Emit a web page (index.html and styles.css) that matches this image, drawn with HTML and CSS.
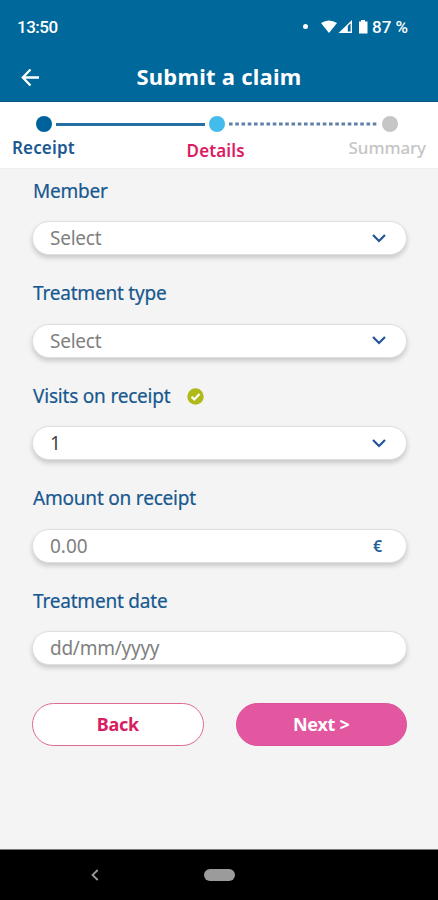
FILE: index.html
```html
<!DOCTYPE html>
<html lang="en">
<head>
<meta charset="utf-8">
<title>Submit a claim</title>
<link rel="stylesheet" href="styles.css">
</head>
<body>
<div class="app">
  <header class="top">
    <div class="status">
      <span class="clock">13:50</span>
      <span class="dot"></span>
      <svg class="signals" width="50" height="16" viewBox="0 0 50 16">
        <path d="M0 4Q8 -1 16 4L8 14Z" fill="#fff"/>
        <path d="M31 1V14H17.500Z" fill="#fff"/>
        <path d="M26.800 7L29.600 4.200V12.600H26.800Z" fill="#00689b"/>
        <path d="M38 2.500H40V1H44V2.500H46.500V14.500H38Z" fill="#fff"/>
      </svg>
      <span class="battery">87 %</span>
    </div>
    <div class="bar">
      <svg class="arrow" width="20" height="20" viewBox="0 0 20 20"><path d="M19 10.500H3M10.500 2.500L2.800 10.500L10.500 18.500" fill="none" stroke="#fff" stroke-width="2.300"/></svg>
      <h1 class="title">Submit a claim</h1>
    </div>
  </header>
  <nav class="steps">
    <div class="track">
      <i class="node done"></i><i class="line solid"></i><i class="node current"></i>
      <svg class="line" height="4" viewBox="0 0 149 4"><path d="M0 2H149" stroke="#5f80a8" stroke-width="2.800" stroke-dasharray="3.600 2.650"/></svg>
      <i class="node todo"></i>
    </div>
    <div class="names"><span class="name receipt">Receipt</span><span class="name details">Details</span><span class="name summary">Summary</span></div>
  </nav>
  <main class="form">
    <div class="field"><div class="label"><span>Member</span></div><div class="input"><span>Select</span><svg class="chevron" width="14" height="9" viewBox="0 0 14 9"><path d="M1 1L7 7L13 1"/></svg></div></div>
    <div class="field"><div class="label"><span>Treatment type</span></div><div class="input"><span>Select</span><svg class="chevron" width="14" height="9" viewBox="0 0 14 9"><path d="M1 1L7 7L13 1"/></svg></div></div>
    <div class="field"><div class="label"><span>Visits on receipt</span><svg class="check" width="17" height="17" viewBox="0 0 17 17"><circle cx="8.500" cy="8.500" r="8.200" fill="#b0b91a"/><path d="M4.500 8.700L7.300 11.400L12.500 6" fill="none" stroke="#fff" stroke-width="2.200"/></svg></div><div class="input"><span class="value">1</span><svg class="chevron" width="14" height="9" viewBox="0 0 14 9"><path d="M1 1L7 7L13 1"/></svg></div></div>
    <div class="field"><div class="label"><span>Amount on receipt</span></div><div class="input"><span class="amount">0.00</span><span class="euro">€</span></div></div>
    <div class="field"><div class="label"><span>Treatment date</span></div><div class="input"><span>dd/mm/yyyy</span></div></div>
    <div class="actions"><button class="btn back">Back</button><button class="btn next">Next &gt;</button></div>
  </main>
  <footer class="system">
    <svg class="sysback" width="8" height="12" viewBox="0 0 8 12"><path d="M6.700 1L1.500 6L6.700 11" fill="none" stroke="#999" stroke-width="1.800"/></svg>
    <span class="home"></span>
  </footer>
</div>
</body>
</html>
```

FILE: styles.css
```css
* { box-sizing: border-box; }
body { margin: 0; font-family: "Noto Sans", sans-serif; background: #f4f4f4; }
.app { width: 438px; height: 900px; display: flex; flex-direction: column; overflow: hidden; }
.top { height: 102px; background: #00689b; color: #fff; border-bottom: 1px solid #075286; flex: none; }
.status { height: 52px; padding: 1px 29px 0 17px; display: flex; align-items: center; font: 500 17px/20px Roboto, sans-serif; }
.clock { flex: 1; letter-spacing: -0.5px; }
.dot { width: 5px; height: 5px; border-radius: 50%; background: #fff; margin-right: 13px; }
.signals { margin-right: 1px; }
.battery { width: 37px; white-space: nowrap; }
.bar { height: 50px; padding-left: 20px; display: flex; align-items: center; }
.arrow { flex: none; }
.title { margin: 0; padding-bottom: 1px; width: 358px; text-align: center; font-size: 22px; line-height: 29px; letter-spacing: 0.25px; font-weight: 700; white-space: nowrap; }
.steps { height: 67px; background: #fff; flex: none; padding-top: 14px; border-bottom: 1px solid #efefef; }
.track { display: flex; align-items: center; height: 16px; padding: 0 40px 0 36px; }
.node { width: 16px; height: 16px; border-radius: 50%; flex: none; }
.done { background: #00629b; }
.current { background: #43bcec; }
.todo { background: #c6c6c6; }
.line { flex: none; margin: 0 4px; width: 149px; }
.solid { height: 3px; background: #2470a3; }
.names { display: flex; justify-content: space-between; padding: 4px 12px 0; font-size: 17px; line-height: 24px; font-weight: 600; }
.receipt { color: #1c5992; letter-spacing: 0.15px; }
.details { color: #db1b62; padding-top: 3px; margin-left: 8px; letter-spacing: 0.15px; }
.summary { color: #c5c5c5; letter-spacing: -0.1px; font-weight: 500; }
.form { height: 680px; flex: none; padding: 7.5px 31px 0 32px; }
.field { height: 102.6px; }
.label { height: 28px; display: flex; align-items: center; color: #17588f; font-size: 19px; font-weight: 400; -webkit-text-stroke: 0.2px #17588f; letter-spacing: -0.2px; line-height: 28px; white-space: nowrap; padding-left: 1px; }
.check { margin: 2px 0 0 17px; }
.input { height: 34px; margin-top: 16.5px; border: 1px solid #dedfdf; border-radius: 17px; background: #fff; box-shadow: 0 3px 5px rgba(0,0,0,.18); padding: 0 20px 0 17px; display: flex; align-items: center; justify-content: space-between; color: #808080; font-size: 19px; letter-spacing: -0.25px; line-height: 28px; }
.value { color: #444; }
.amount { letter-spacing: 0; }
.chevron path { fill: none; stroke: #245397; stroke-width: 2.2; }
.euro { color: #245f9b; font-size: 16px; font-weight: 600; margin-right: 4px; }
.actions { display: flex; gap: 32px; padding-top: 13.5px; }
.btn { flex: 1; height: 43px; border-radius: 22px; font: 700 18px/24px "Noto Sans", sans-serif; letter-spacing: -0.3px; padding: 0; }
.back { border: 1px solid #dc6b92; background: #fff; color: #d72062; }
.next { border: 1px solid #dd5199; background: #e2579f; color: #fff; }
.system { flex: 1; background: #000; border-top: 1px solid #777; display: flex; align-items: center; padding-left: 91px; }
.home { width: 31px; height: 12px; border-radius: 6px; background: #9b9b9b; margin-left: 105px; }
```
